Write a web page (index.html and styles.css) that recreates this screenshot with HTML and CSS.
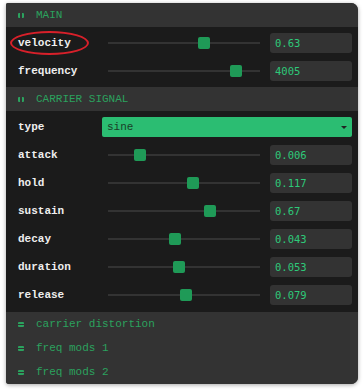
FILE: index.html
```html
<!DOCTYPE html>
<html lang="en">
<head>
    <meta charset="UTF-8">
    <meta name="viewport" content="width=device-width, initial-scale=1.0">
    <title>Synth Controls</title>
    <link rel="stylesheet" href="styles.css">
</head>
<body>
    <div class="panel">
        <div class="folder-title"><span class="icon-open"></span>MAIN</div>
        <div class="folder-body">
            <div class="row">
                <div class="label">velocity<span class="ring"></span></div>
                <div class="slider"><div class="track"></div><div class="thumb" style="left: 63%"></div></div>
                <div class="value">0.63</div>
            </div>
            <div class="row">
                <div class="label">frequency</div>
                <div class="slider"><div class="track"></div><div class="thumb" style="left: 84%"></div></div>
                <div class="value">4005</div>
            </div>
        </div>

        <div class="folder-title"><span class="icon-open"></span>CARRIER SIGNAL</div>
        <div class="folder-body carrier">
            <div class="row">
                <div class="label">type</div>
                <div class="select">sine<span class="arrow"></span></div>
            </div>
            <div class="row">
                <div class="label">attack</div>
                <div class="slider"><div class="track"></div><div class="thumb" style="left: 21%"></div></div>
                <div class="value">0.006</div>
            </div>
            <div class="row">
                <div class="label">hold</div>
                <div class="slider"><div class="track"></div><div class="thumb" style="left: 56%"></div></div>
                <div class="value">0.117</div>
            </div>
            <div class="row">
                <div class="label">sustain</div>
                <div class="slider"><div class="track"></div><div class="thumb" style="left: 67%"></div></div>
                <div class="value">0.67</div>
            </div>
            <div class="row">
                <div class="label">decay</div>
                <div class="slider"><div class="track"></div><div class="thumb" style="left: 44%"></div></div>
                <div class="value">0.043</div>
            </div>
            <div class="row">
                <div class="label">duration</div>
                <div class="slider"><div class="track"></div><div class="thumb" style="left: 47%"></div></div>
                <div class="value">0.053</div>
            </div>
            <div class="row">
                <div class="label">release</div>
                <div class="slider"><div class="track"></div><div class="thumb" style="left: 51%"></div></div>
                <div class="value">0.079</div>
            </div>
        </div>

        <div class="folder-closed"><span class="icon-closed"></span>carrier distortion</div>
        <div class="folder-closed"><span class="icon-closed"></span>freq mods 1</div>
        <div class="folder-closed"><span class="icon-closed"></span>freq mods 2</div>
    </div>
</body>
</html>
```

FILE: styles.css
```css
body {
    margin: 0;
    padding: 3px 5px 8px 6px;
    background-color: #fff;
    font-family: "Liberation Mono", "Courier New", monospace;
    font-size: 11px;
}
.panel {
    width: 352px;
    background-color: #333;
    border-radius: 2px 7px 7px 3px;
    box-shadow: 0 1px 4px rgba(0, 0, 0, 0.35);
    overflow: hidden;
}
.folder-title,
.folder-closed {
    display: flex;
    align-items: center;
    height: 24px;
    padding-left: 12px;
    color: #2ba25e;
    background-color: #333;
}
.icon-open {
    width: 6px;
    height: 5px;
    margin-right: 12px;
    border-left: 2px solid #2ba25e;
    border-right: 2px solid #2ba25e;
    border-radius: 1px;
    box-sizing: border-box;
}
.icon-closed {
    width: 6px;
    height: 5px;
    margin-right: 12px;
    border-top: 2px solid #2ba25e;
    border-bottom: 2px solid #2ba25e;
    border-radius: 1px;
    box-sizing: border-box;
}
.folder-body {
    background-color: #1b1b1b;
    padding: 2px 6px 2px 12px;
}
.carrier {
    padding-bottom: 3px;
}
.row {
    display: flex;
    align-items: center;
    height: 28px;
}
.label {
    width: 84px;
    color: #eee;
    font-weight: bold;
    position: relative;
}
.ring {
    position: absolute;
    left: -8px;
    top: -6px;
    width: 79px;
    height: 24px;
    border: 2px solid #d8202a;
    border-radius: 50%;
    box-sizing: border-box;
}
.slider {
    position: relative;
    width: 152px;
    height: 12px;
    margin-left: 6px;
    margin-right: 10px;
}
.track {
    position: absolute;
    left: 0;
    right: 0;
    top: 5px;
    height: 2px;
    background-color: #333;
}
.thumb {
    position: absolute;
    top: 0;
    width: 12px;
    height: 12px;
    margin-left: -6px;
    border-radius: 2px;
    background-color: #1f9a57;
}
.value {
    width: 82px;
    height: 20px;
    line-height: 20px;
    padding-left: 5px;
    box-sizing: border-box;
    border-radius: 3px;
    background-color: #333;
    color: #2ec979;
    font-family: "DejaVu Sans Mono", monospace;
    font-size: 10.5px;
}
.select {
    position: relative;
    flex: 1;
    height: 20px;
    line-height: 20px;
    padding-left: 5px;
    border-radius: 2px;
    background-color: #2bbd72;
    color: #1a3d28;
}
.arrow {
    position: absolute;
    right: 5px;
    top: 9px;
    border-left: 3px solid transparent;
    border-right: 3px solid transparent;
    border-top: 3px solid #222;
}
```
